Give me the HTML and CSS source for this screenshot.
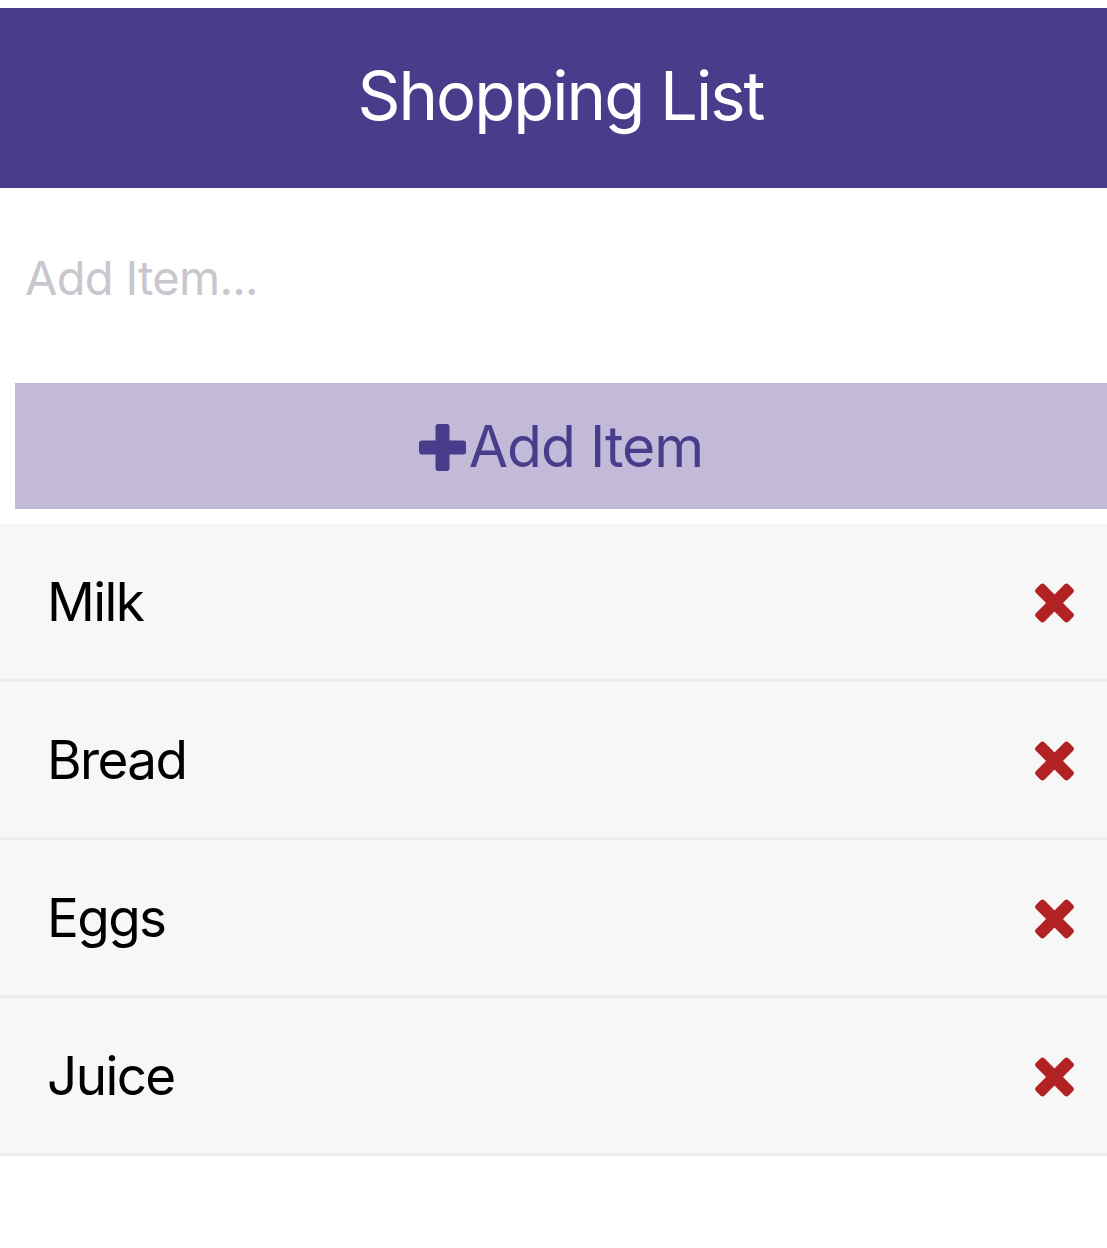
FILE: index.html
```html
<!DOCTYPE html>
<html>
<head>
<meta charset="utf-8">
<link rel="stylesheet" href="styles.css">
</head>
<body>
<header class="header"><h1 class="title">Shopping List</h1></header>
<div class="input-wrap"><input class="add-input" type="text" placeholder="Add Item..."></div>
<button class="add-btn">
  <svg class="plus" viewBox="0 0 47 47" width="47" height="47"><rect x="0" y="16.5" width="47" height="14" rx="3"/><rect x="16.5" y="0" width="14" height="47" rx="3"/></svg><span>Add Item</span>
</button>
<ul class="list">
  <li class="item"><span class="item-text">Milk</span><svg class="del" viewBox="0 0 41 40" width="41" height="40"><g transform="rotate(45 20.5 20)"><rect x="-2.5" y="14" width="46" height="12" rx="3"/><rect x="14.5" y="-3" width="12" height="46" rx="3"/></g></svg></li>
  <li class="item"><span class="item-text">Bread</span><svg class="del" viewBox="0 0 41 40" width="41" height="40"><g transform="rotate(45 20.5 20)"><rect x="-2.5" y="14" width="46" height="12" rx="3"/><rect x="14.5" y="-3" width="12" height="46" rx="3"/></g></svg></li>
  <li class="item"><span class="item-text">Eggs</span><svg class="del" viewBox="0 0 41 40" width="41" height="40"><g transform="rotate(45 20.5 20)"><rect x="-2.5" y="14" width="46" height="12" rx="3"/><rect x="14.5" y="-3" width="12" height="46" rx="3"/></g></svg></li>
  <li class="item"><span class="item-text">Juice</span><svg class="del" viewBox="0 0 41 40" width="41" height="40"><g transform="rotate(45 20.5 20)"><rect x="-2.5" y="14" width="46" height="12" rx="3"/><rect x="14.5" y="-3" width="12" height="46" rx="3"/></g></svg></li>
</ul>
</body>
</html>
```
FILE: styles.css
```css
html, body { background: #fff; }
body {
  margin: 8px 0 0;
  font-family: Inter, "Liberation Sans", sans-serif;
}
.header {
  height: 180px;
  background: #483d8b;
  display: flex;
  align-items: center;
  justify-content: center;
  padding-left: 14px;
}
.title {
  margin: -6px 0 0;
  color: #fff;
  font-weight: 400;
  font-size: 67px;
  line-height: 1;
  letter-spacing: -2px;
}
.input-wrap {
  height: 195px;
  display: flex;
  align-items: center;
  padding: 0 0 0 25px;
  box-sizing: border-box;
}
.add-input {
  border: none;
  outline: none;
  background: transparent;
  font-family: Inter, "Liberation Sans", sans-serif;
  font-size: 47px;
  letter-spacing: -0.7px;
  padding: 0;
  margin-top: -16px;
  width: 100%;
  color: #000;
}
.add-input::placeholder { color: #c7c7cd; }
.add-btn {
  display: flex;
  align-items: center;
  justify-content: center;
  margin: 0 0 0 15px;
  width: calc(100% - 15px);
  height: 126px;
  border: none;
  background: #c3b9d8;
  color: #483d8b;
  font-family: Inter, "Liberation Sans", sans-serif;
  font-size: 57px;
  letter-spacing: -1px;
  padding: 0;
}
.plus { fill: #483d8b; margin-right: 3px; margin-top: 2px; }
.list {
  list-style: none;
  margin: 15px 0 0;
  padding: 0;
}
.item {
  height: 155px;
  background: #f7f7f7;
  border-bottom: 3px solid #ececec;
  display: flex;
  align-items: center;
  justify-content: space-between;
  padding: 0 32px 0 47px;
}
.item-text {
  font-size: 53px;
  letter-spacing: -1.6px;
  color: #000;
}
.del { fill: #b22222; margin-top: 2px; }
```
